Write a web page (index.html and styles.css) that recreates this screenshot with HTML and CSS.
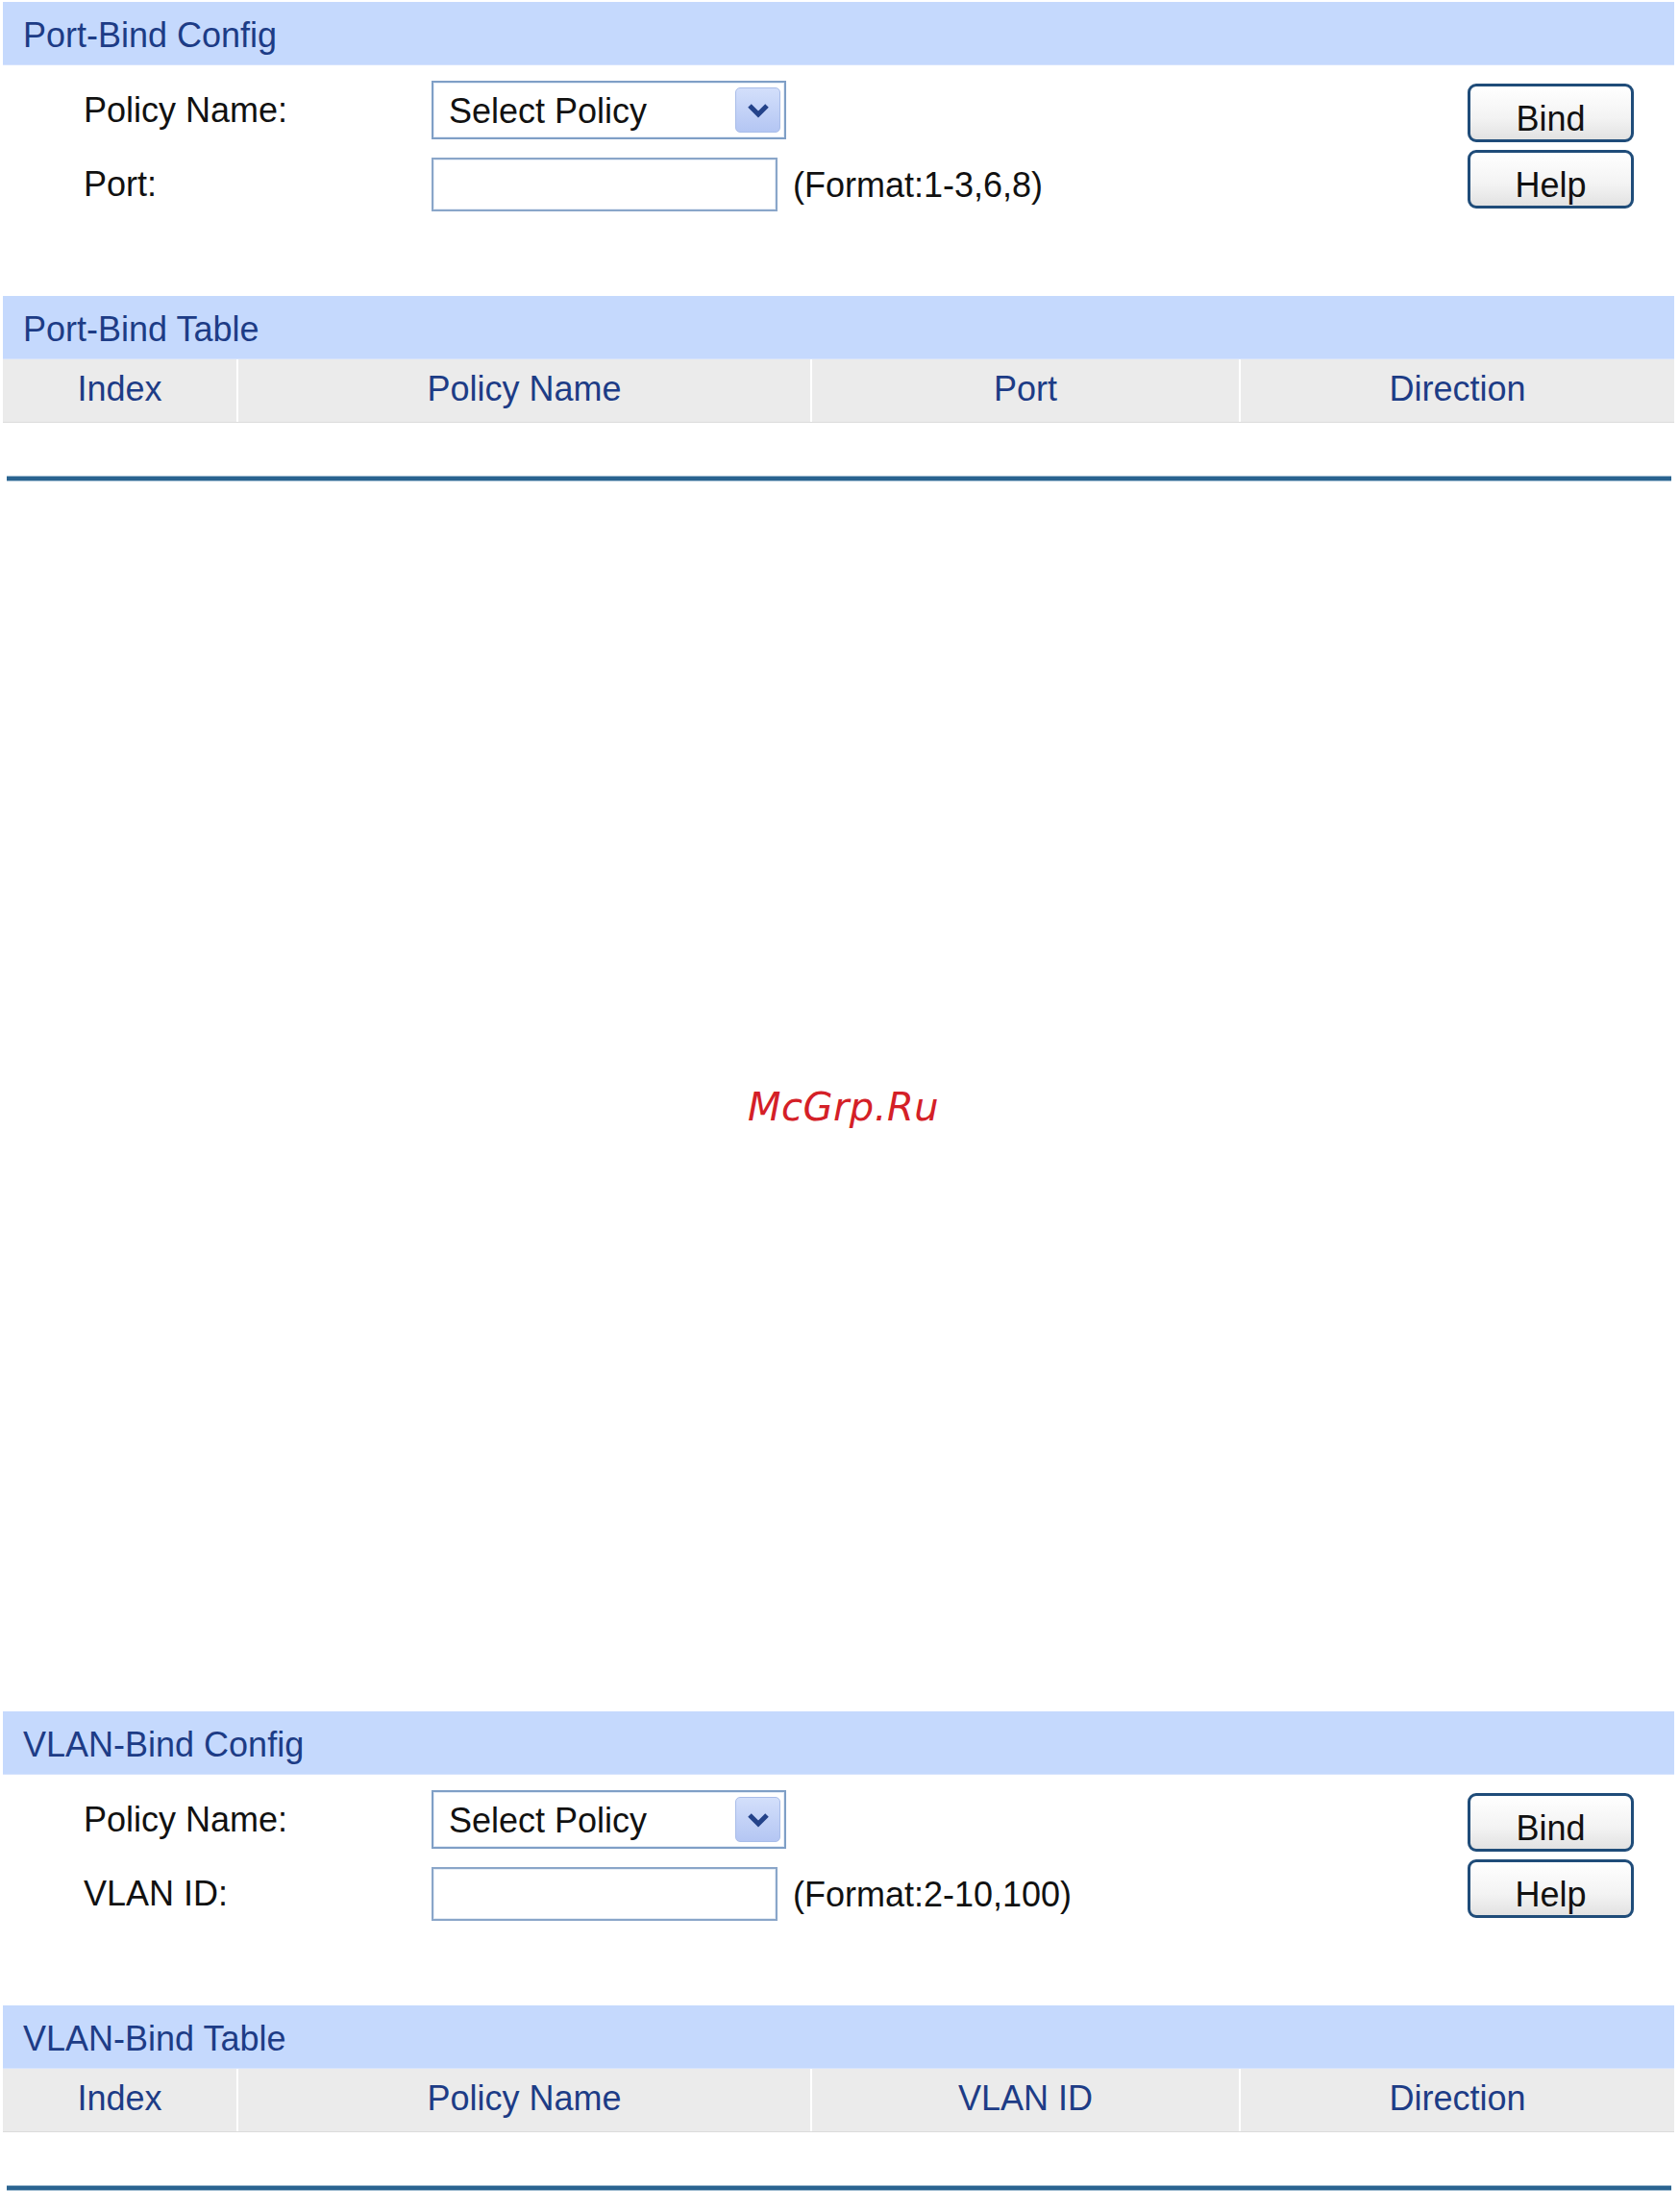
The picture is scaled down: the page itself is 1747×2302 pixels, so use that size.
FILE: index.html
```html
<!DOCTYPE html>
<html lang="en">
<head>
    <meta charset="UTF-8">
    <title>Port-Bind / VLAN-Bind</title>
    <link rel="stylesheet" href="styles.css">
</head>
<body>
    <div class="page">
        <div class="panel">
            <div class="bar">Port-Bind Config</div>
            <div class="config">
                <div class="form">
                    <div class="row">
                        <div class="label">Policy Name:</div>
                        <div class="select">
                            <span class="select-text">Select Policy</span>
                            <span class="select-arrow">
                                <svg width="24" height="16" viewBox="0 0 24 16"><polyline points="3,3 12,12 21,3" fill="none" stroke="#24438a" stroke-width="5"/></svg>
                            </span>
                        </div>
                    </div>
                    <div class="row row-second">
                        <div class="label">Port:</div>
                        <input class="text-input" type="text">
                        <span class="hint">(Format:1-3,6,8)</span>
                    </div>
                </div>
                <div class="actions">
                    <button class="btn">Bind</button>
                    <button class="btn">Help</button>
                </div>
            </div>
            <div class="bar">Port-Bind Table</div>
            <div class="thead">
                <div class="th col-index">Index</div>
                <div class="th col-name">Policy Name</div>
                <div class="th col-port">Port</div>
                <div class="th col-dir">Direction</div>
            </div>
            <div class="rule"></div>
        </div>

        <div class="gap">
            <div class="mark">McGrp.Ru</div>
        </div>

        <div class="panel">
            <div class="bar">VLAN-Bind Config</div>
            <div class="config">
                <div class="form">
                    <div class="row">
                        <div class="label">Policy Name:</div>
                        <div class="select">
                            <span class="select-text">Select Policy</span>
                            <span class="select-arrow">
                                <svg width="24" height="16" viewBox="0 0 24 16"><polyline points="3,3 12,12 21,3" fill="none" stroke="#24438a" stroke-width="5"/></svg>
                            </span>
                        </div>
                    </div>
                    <div class="row row-second">
                        <div class="label">VLAN ID:</div>
                        <input class="text-input" type="text">
                        <span class="hint">(Format:2-10,100)</span>
                    </div>
                </div>
                <div class="actions">
                    <button class="btn">Bind</button>
                    <button class="btn">Help</button>
                </div>
            </div>
            <div class="bar">VLAN-Bind Table</div>
            <div class="thead">
                <div class="th col-index">Index</div>
                <div class="th col-name">Policy Name</div>
                <div class="th col-port">VLAN ID</div>
                <div class="th col-dir">Direction</div>
            </div>
            <div class="rule"></div>
        </div>
    </div>
</body>
</html>
```

FILE: styles.css
```css
body {
    margin: 0;
    background-color: #fff;
    font-family: "Liberation Sans", Arial, sans-serif;
    font-size: 36px;
    color: #111;
}
.page {
    padding: 2px 5px 0 3px;
}
.bar {
    height: 66px;
    box-sizing: border-box;
    padding: 3px 0 0 21px;
    line-height: 63px;
    background-color: #c5d9fd;
    border-bottom: 1px solid #d6e3fd;
    color: #1d3c86;
}
.config {
    display: flex;
    height: 240px;
    box-sizing: border-box;
}
.form {
    flex: 1;
    padding: 16px 0 0 84px;
}
.row {
    display: flex;
    align-items: center;
    height: 61px;
}
.row-second {
    height: 56px;
    margin-top: 19px;
}
.label {
    width: 362px;
}
.select {
    display: flex;
    align-items: center;
    width: 369px;
    height: 61px;
    box-sizing: border-box;
    border: 2px solid #7f9fc6;
    box-shadow: inset 0 0 0 1px #e4ecf7;
    padding: 0 4px 0 16px;
}
.select-text {
    flex: 1;
    padding-top: 3px;
}
.select-arrow {
    display: flex;
    align-items: center;
    justify-content: center;
    width: 47px;
    height: 47px;
    box-sizing: border-box;
    border: 1px solid #a9bde9;
    border-radius: 5px;
    background: linear-gradient(#d3dffb, #b4c6f3);
}
.text-input {
    width: 360px;
    height: 56px;
    box-sizing: border-box;
    margin: 0;
    border: 2px solid #8aa6c9;
    box-shadow: inset 0 0 0 1px #e6edf6;
    background-color: #fff;
    outline: none;
}
.hint {
    margin-left: 16px;
    padding-top: 2px;
}
.actions {
    display: flex;
    flex-direction: column;
    gap: 8px;
    padding: 19px 42px 0 0;
}
.btn {
    width: 173px;
    height: 61px;
    box-sizing: border-box;
    padding: 12px 0 0;
    border: 3px solid #1f4c79;
    border-radius: 9px;
    background: linear-gradient(#ffffff 0%, #f3f3f3 60%, #e2e2e2 100%);
    font-family: "Liberation Sans", Arial, sans-serif;
    font-size: 36px;
    color: #111;
}
.thead {
    display: flex;
    height: 66px;
    background-color: #ebebeb;
    border-bottom: 1px solid #dcdcdc;
    box-sizing: border-box;
}
.th {
    text-align: center;
    line-height: 62px;
    color: #1d3c86;
    border-left: 2px solid #fff;
}
.col-index {
    width: 243px;
    border-left: none;
}
.col-name {
    width: 595px;
}
.col-port {
    width: 444px;
}
.col-dir {
    flex: 1;
}
.rule {
    margin: 55px 3px 0 4px;
    height: 4px;
    background-color: #2a6490;
    border-top: 1px solid #9cb9cf;
    border-bottom: 1px solid #9cb9cf;
}
.gap {
    height: 1280px;
    box-sizing: border-box;
    padding: 631px 0 0 10px;
    text-align: center;
}
.mark {
    font-family: "DejaVu Sans", sans-serif;
    font-style: italic;
    font-size: 40px;
    line-height: 40px;
    letter-spacing: 0.5px;
    color: #d42027;
}
```
